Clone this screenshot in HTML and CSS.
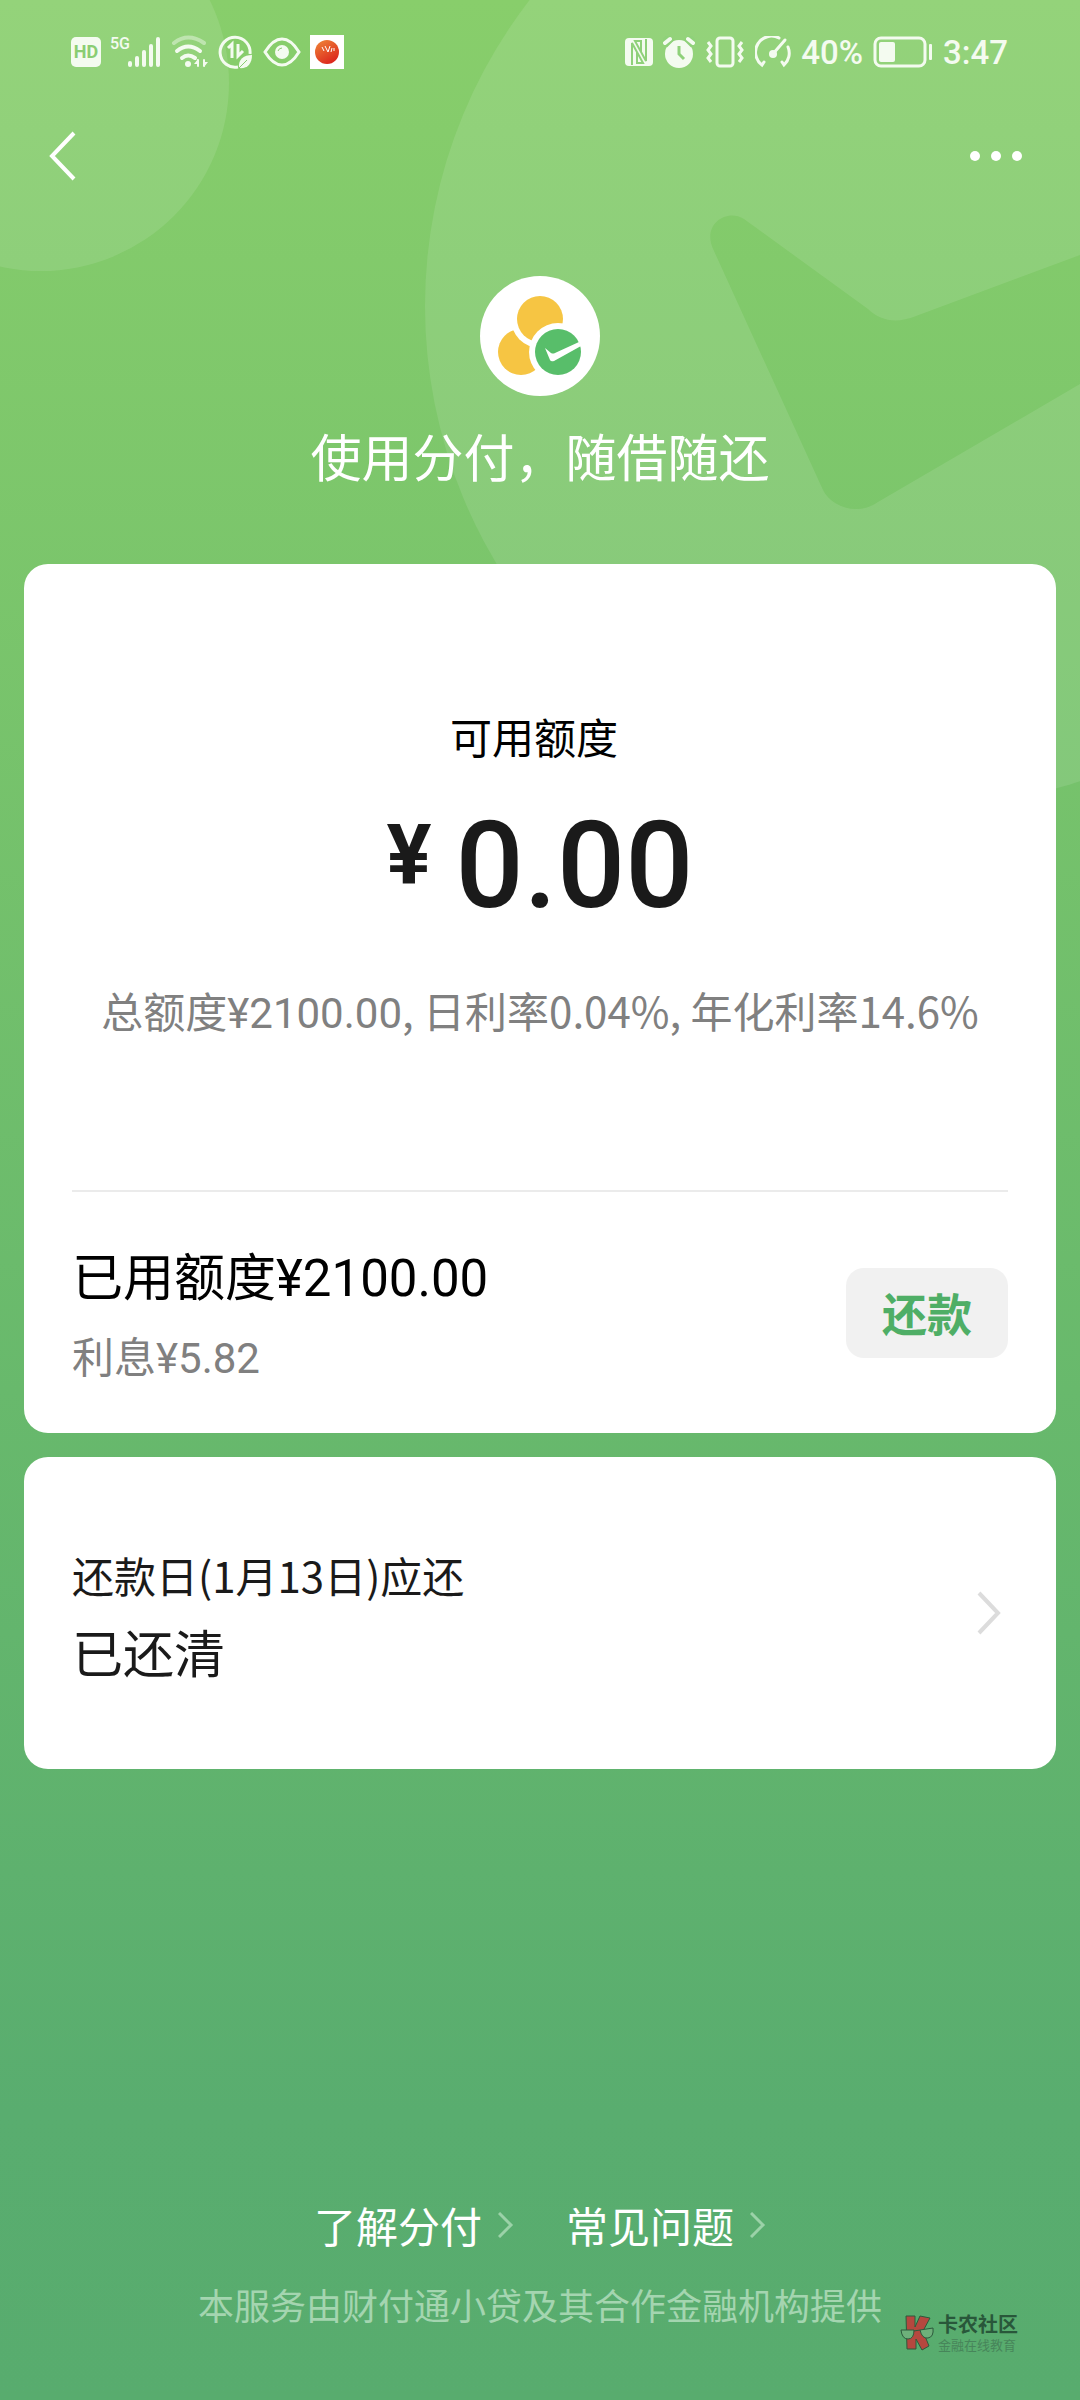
FILE: index.html
```html
<!DOCTYPE html>
<html lang="zh-CN">
  <head>
    <meta charset="UTF-8" />
    <meta name="viewport" content="width=device-width, initial-scale=1.0" />
    <title>分付</title>
    <link rel="stylesheet" href="styles.css">
  </head>
  <body>
    <div class="page">
      <svg class="backdrop" width="1080" height="810" viewBox="0 0 1080 810" aria-hidden="true">
        <defs>
          <mask id="tick">
            <rect width="1080" height="810" fill="#fff" />
            <path fill="#000" d="M744 219C728 209 706 222 711 243Q712 247 714 251L823 490C831 506 856 517 878 502L1080 384V255L916 316C896 324 881 321 868 309Z" />
          </mask>
        </defs>
        <circle cx="41" cy="83" r="188" />
        <circle cx="925" cy="306" r="500" mask="url(#tick)" />
      </svg>

      <div class="status">
        <div class="status-left">
          <span class="hd">HD</span>
          <span class="net">5G</span>
          <svg width="34" height="32" viewBox="0 0 34 32" fill="currentColor">
            <rect x="0" y="25" width="4" height="6" rx="2" />
            <rect x="7" y="20" width="4" height="11" rx="2" />
            <rect x="14" y="14" width="4" height="17" rx="2" />
            <rect x="21" y="8" width="4" height="23" rx="2" />
            <rect x="28" y="1" width="4" height="30" rx="2" />
          </svg>
          <svg width="38" height="34" viewBox="0 0 38 34" fill="none" stroke="currentColor" stroke-width="4" stroke-linecap="round">
            <path d="M3 8Q17 -3 33 8" opacity=".45" />
            <path d="M6 16Q17 7 29 16M11 23Q17 18 24 23" />
            <circle cx="17" cy="29" r="3" fill="currentColor" stroke="none" />
            <path d="M27 25V31M33 25V31" stroke-width="2" />
            <path d="M27 24L23 29H27ZM33 32L37 27H33Z" fill="currentColor" stroke="none" />
          </svg>
          <svg width="36" height="36" viewBox="0 0 36 36" fill="none" stroke="currentColor" stroke-width="3">
            <path d="M32 20A15 15 0 1 0 20 33" />
            <path d="M10 14L14 10V24M20 10V22L25 17" />
            <path d="M21 34C20 25 26 21 34 21C34 30 29 35 21 34Z" fill="currentColor" stroke="none" />
            <path d="M21 34L29 26" stroke="#8acd73" stroke-width="1" />
          </svg>
          <svg width="38" height="32" viewBox="0 0 38 32" fill="none" stroke="currentColor" stroke-width="3">
            <path d="M2 16Q10 3 19 3T36 16Q28 29 19 29T2 16Z" />
            <circle cx="19" cy="16" r="7" fill="currentColor" stroke="none" />
            <path d="M15 15Q16 12 19 12" stroke="#8acd73" stroke-width="1" />
          </svg>
          <svg width="34" height="34" viewBox="0 0 34 34">
            <defs>
              <linearGradient id="ball" x1="0" y1="0" x2="0.6" y2="1">
                <stop offset="0" stop-color="#ef8838" />
                <stop offset="1" stop-color="#dc281d" />
              </linearGradient>
            </defs>
            <rect width="34" height="34" fill="#fff" />
            <circle cx="17" cy="17" r="12" fill="url(#ball)" />
            <path d="M12 12L14 16M15 11L18 17M18 17L20 11M21 17L22 13M24 16L24 13" fill="none" stroke="#fff" stroke-width="1" />
          </svg>
        </div>
        <div class="status-right">
          <svg width="28" height="28" viewBox="0 0 28 28">
            <rect width="28" height="28" rx="4" fill="currentColor" />
            <path d="M7 27V5L18 25H12V14M21 1V23L10 3H16V14" fill="none" stroke="#8fd17a" stroke-width="2" />
          </svg>
          <svg width="32" height="32" viewBox="0 0 32 32">
            <circle cx="16" cy="18" r="14" fill="currentColor" />
            <path d="M1 8L8 1M31 8L24 1" stroke="#8fd17a" stroke-width="9" />
            <path d="M2 7L7 3M30 7L25 3" stroke="currentColor" stroke-width="4" stroke-linecap="round" />
            <path d="M16 10V18L21 23" fill="none" stroke="#8fd17a" stroke-width="3" />
          </svg>
          <svg width="40" height="32" viewBox="0 0 40 32" fill="none" stroke="currentColor" stroke-width="3">
            <rect x="12" y="2" width="16" height="28" rx="3" />
            <path d="M3 6L6 10L3 14L6 18L3 22L6 26M37 6L34 10L37 14L34 18L37 22L34 26" />
          </svg>
          <svg width="36" height="32" viewBox="0 0 36 32" fill="none" stroke="currentColor" stroke-width="3" stroke-linecap="round">
            <path d="M9 26L7 29A16 16 0 0 1 24 2M33 11A16 16 0 0 1 29 29L27 26" />
            <path d="M17 19L30 4" />
            <circle cx="18" cy="18" r="4" fill="currentColor" stroke="none" />
          </svg>
          <span>40%</span>
          <svg width="60" height="32" viewBox="0 0 60 32">
            <rect x="2" y="2" width="50" height="28" rx="6" fill="none" stroke="currentColor" stroke-width="3" />
            <rect x="6" y="6" width="16" height="20" rx="2" fill="currentColor" />
            <rect x="56" y="8" width="3" height="16" rx="1" fill="currentColor" />
          </svg>
          <span>3:47</span>
        </div>
      </div>

      <div class="nav">
        <button class="icon-btn" type="button" aria-label="返回">
          <svg width="28" height="50" viewBox="0 0 28 50" fill="none" stroke="currentColor" stroke-width="4">
            <path d="M25 2L3 25L25 48" />
          </svg>
        </button>
        <button class="icon-btn" type="button" aria-label="更多">
          <svg width="52" height="12" viewBox="0 0 52 12" fill="currentColor">
            <circle cx="5" cy="6" r="5" />
            <circle cx="26" cy="6" r="5" />
            <circle cx="47" cy="6" r="5" />
          </svg>
        </button>
      </div>

      <header class="hero">
        <svg width="120" height="120" viewBox="0 0 120 120">
          <circle cx="60" cy="60" r="60" fill="#fff" />
          <circle cx="41" cy="76" r="23" fill="#f6c543" />
          <circle cx="60" cy="43" r="29" fill="#fff" />
          <circle cx="60" cy="43" r="23" fill="#f6c543" />
          <circle cx="78" cy="76" r="29" fill="#fff" />
          <circle cx="78" cy="76" r="23" fill="#58be6a" />
          <path d="M65 72L71 77Q73 78 75 77L99 66L101 70L74 85Q71 86 70 84Z" fill="#fff" />
        </svg>
        <h1>使用分付，随借随还</h1>
      </header>

      <main>
        <section class="card">
          <div class="quota">
            <h2>可用额度</h2>
            <p class="amount"><span class="yen">¥</span><span class="sum">0.00</span></p>
            <p class="rates">总额度<span class="num">¥2100.00</span>, 日利率0.04%, 年化利率14.6%</p>
          </div>
          <div class="used">
            <div>
              <p class="big black">已用额度<span class="num">¥2100.00</span></p>
              <p class="interest">利息<span class="num">¥5.82</span></p>
            </div>
            <button class="repay" type="button">还款</button>
          </div>
        </section>

        <a class="card due" href="#">
          <div>
            <p class="due-date">还款日(1月13日)应还</p>
            <p class="big">已还清</p>
          </div>
          <svg width="26" height="44" viewBox="0 0 26 44" fill="none" stroke="#dcdcdc" stroke-width="4">
            <path d="M3 2L22 22L3 42" />
          </svg>
        </a>
      </main>

      <footer>
        <nav class="links">
          <a href="#">了解分付
            <svg width="16" height="26" viewBox="0 0 16 26" fill="none" stroke="#9bd2a8" stroke-width="3">
              <path d="M1 1L13 13L1 25" />
            </svg>
          </a>
          <a href="#">常见问题
            <svg width="16" height="26" viewBox="0 0 16 26" fill="none" stroke="#9bd2a8" stroke-width="3">
              <path d="M1 1L13 13L1 25" />
            </svg>
          </a>
        </nav>
        <p class="provider">本服务由财付通小贷及其合作金融机构提供</p>
      </footer>

      <div class="watermark">
        <svg width="34" height="36" viewBox="0 0 34 36" stroke="#2c5a3c" stroke-width="1">
          <path d="M6 1H15V12L20 1L30 3L23 16L29 31L22 35L16 24V34H7Z" fill="#b5483f" />
          <path d="M1 15H14Q14 24 8 24T1 15ZM20 15L33 13Q34 22 28 23T20 15ZM14 16L20 15" fill="#6db07a" />
        </svg>
        <div>
          <p class="mark-name">卡农社区</p>
          <p class="mark-sub">金融在线教育</p>
        </div>
      </div>
    </div>
  </body>
</html>
```

FILE: styles.css
```css
* {
  box-sizing: border-box;
}
body {
  margin: 0;
  font-family: "Noto Sans CJK SC", sans-serif;
  color: #1a1a1a;
}
h1,
h2,
p {
  margin: 0;
  font-weight: 400;
}
svg {
  display: block;
  flex: none;
}
a {
  color: inherit;
  text-decoration: none;
}
button {
  border: none;
  font-family: inherit;
  cursor: pointer;
}
.page {
  position: relative;
  display: flex;
  flex-direction: column;
  min-height: 100vh;
  overflow: hidden;
  background: linear-gradient(#88ce6b, #68b96c 58%, #59ad6f 88%, #58ac6e);
}
.backdrop {
  position: absolute;
  top: 0;
  left: 0;
  fill: rgba(255, 255, 255, 0.1);
}

/* status bar */
.status {
  position: relative;
  display: flex;
  justify-content: space-between;
  align-items: center;
  height: 104px;
  padding: 0 72px 0 71px;
  color: #f4fbf0;
  font-family: Roboto, sans-serif;
  font-size: 33px;
  font-weight: 500;
}
.status-left,
.status-right {
  display: flex;
  align-items: center;
  gap: 9px;
}
.status-right {
  gap: 10px;
}
.hd {
  width: 30px;
  border-radius: 5px;
  background: #f4fbf0;
  color: #8acd73;
  font-size: 18px;
  font-weight: 700;
  line-height: 30px;
  text-align: center;
}
.net {
  align-self: flex-start;
  margin-right: -11px;
  font-size: 16px;
  line-height: 20px;
}

/* top bar */
.nav {
  position: relative;
  display: flex;
  justify-content: space-between;
  align-items: center;
  height: 104px;
  padding: 0 58px 0 49px;
}
.icon-btn {
  padding: 0;
  background: none;
  color: #fff;
}

.hero {
  position: relative;
  display: flex;
  flex-direction: column;
  align-items: center;
  gap: 21px;
  padding: 68px 24px 71px;
  color: #fff;
}
.hero h1 {
  font-size: 51px;
  line-height: 76px;
}

/* cards */
main {
  position: relative;
  display: flex;
  flex-direction: column;
  gap: 24px;
  padding: 0 24px;
}
.card {
  padding: 0 48px;
  border-radius: 24px;
  background: #fff;
}
.quota {
  padding: 142px 0 146px;
  border-bottom: 2px solid #ebebeb;
  text-align: center;
}
.quota h2 {
  padding-right: 12px;
  color: #000;
  font-size: 42px;
  line-height: 60px;
}
.amount {
  display: flex;
  justify-content: center;
  align-items: flex-start;
  gap: 24px;
  margin: 30px 0 44px;
  font-family: Roboto, sans-serif;
}
.num {
  font-family: Roboto, "Noto Sans CJK SC", sans-serif;
}
.yen {
  font-size: 84px;
  font-weight: 700;
  line-height: 120px;
}
.sum {
  font-size: 120px;
  font-weight: 500;
  line-height: 140px;
}
.rates,
.interest {
  color: #808080;
  font-size: 42px;
  line-height: 60px;
}
.interest {
  margin-top: 8px;
}
.used {
  display: flex;
  justify-content: space-between;
  align-items: center;
  padding: 44px 0;
}
.big {
  font-size: 51px;
  line-height: 76px;
}
.black {
  color: #000;
}
.repay {
  padding: 0 36px;
  border-radius: 18px;
  background: #f1f1f1;
  color: #4fae66;
  font-size: 45px;
  font-weight: 700;
  line-height: 90px;
}
.due {
  display: flex;
  justify-content: space-between;
  align-items: center;
  min-height: 312px;
  padding-right: 54px;
}
.due-date {
  font-size: 42px;
  line-height: 76px;
}

footer {
  position: relative;
  margin-top: auto;
  padding-bottom: 66px;
  text-align: center;
}
.links {
  display: flex;
  justify-content: center;
  gap: 52px;
  margin-bottom: 11px;
  color: #fff;
  font-size: 42px;
  line-height: 76px;
}
.links a {
  display: flex;
  align-items: center;
  gap: 16px;
}
.provider {
  color: #a4d5b0;
  font-size: 36px;
  line-height: 60px;
}

/* corner stamp */
.watermark {
  position: absolute;
  right: 62px;
  bottom: 46px;
  display: flex;
  align-items: center;
  gap: 4px;
  color: #29573a;
}
.mark-name {
  font-size: 20px;
  font-weight: 700;
  line-height: 24px;
}
.mark-sub {
  color: #47855a;
  font-size: 13px;
  line-height: 18px;
}
```
